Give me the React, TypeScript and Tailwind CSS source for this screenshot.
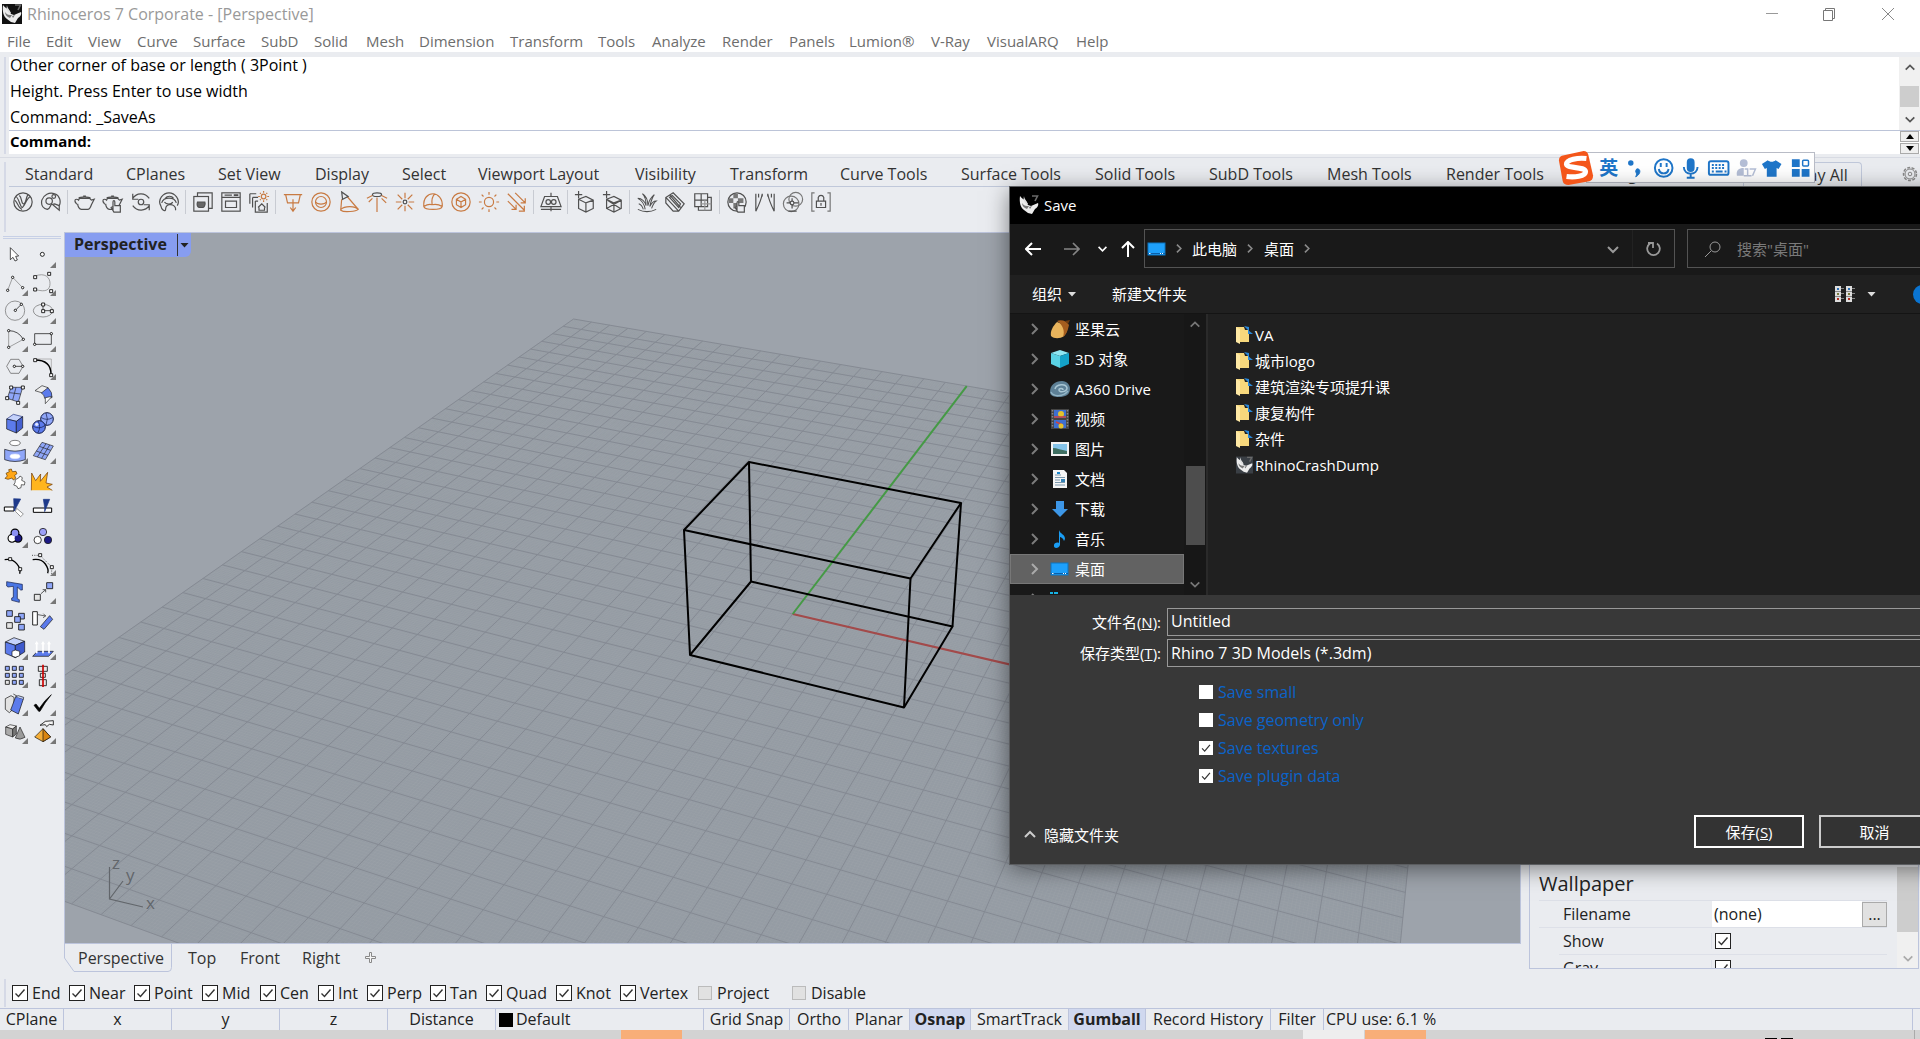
import type { ReactNode } from "react";

/* ---------- shared pieces ---------- */

function Check({ label, checked, size, box, text }: { label: string; checked: boolean; size: string; box: string; text: string }) {
  return (
    <label className={`flex items-center whitespace-nowrap ${text}`}>
      <span className={`relative block shrink-0 ${size}`}>
        <input type="checkbox" defaultChecked={checked} className={`block h-full w-full appearance-none ${box}`} />
        {checked && (
          <svg viewBox="0 0 16 16" className="pointer-events-none absolute inset-0 h-full w-full">
            <path d="M3.5 8.5 6.5 11.5 12.5 4.5" fill="none" stroke="#333" strokeWidth="1.4" />
          </svg>
        )}
      </span>
      {label}
    </label>
  );
}

function Chevron({ dir, color, className }: { dir: "up" | "down" | "right"; color: string; className: string }) {
  const d = dir === "up" ? "M2 9 7 4 12 9" : dir === "down" ? "M2 5 7 10 12 5" : "M5 2 10 7 5 12";
  return (
    <svg viewBox="0 0 14 14" className={`shrink-0 ${className}`}>
      <path d={d} fill="none" stroke={color} strokeWidth="2" />
    </svg>
  );
}

function RhinoMark({ className, bg }: { className: string; bg: string }) {
  return (
    <svg viewBox="0 0 20 20" className={`shrink-0 ${className}`}>
      <rect width="20" height="20" fill={bg} />
      <path d="M1 1C3 4 5 4 7 6L9 10 12 11 19 8C20 10 18 13 16 14L13 19 9 18 5 15C2 13 0 8 1 1Z" fill="#ececec" />
      <path d="M5 1C5 4 8 6 9 9L7 9C5 7 4 4 5 1Z" fill="#ddd" />
      <path d="M3 8C5 11 7 11 10 11L8 14C5 13 3 11 3 8Z" fill="#777" />
      <path d="M10 12l3-1-2 3Z" fill="#777" />
      <path d="M13 1h5.500L16 6" fill="none" stroke="#6a6a6a" strokeWidth="1.600" />
    </svg>
  );
}

/* ---------- menu and tab data ---------- */

const MENU: [string, string][] = [
  ["File", "w-[39px]"], ["Edit", "w-[42px]"], ["View", "w-[49px]"], ["Curve", "w-[56px]"], ["Surface", "w-[68px]"],
  ["SubD", "w-[53px]"], ["Solid", "w-[52px]"], ["Mesh", "w-[53px]"], ["Dimension", "w-[91px]"], ["Transform", "w-[88px]"],
  ["Tools", "w-[54px]"], ["Analyze", "w-[70px]"], ["Render", "w-[67px]"], ["Panels", "w-[60px]"], ["Lumion®", "w-[82px]"],
  ["V-Ray", "w-[56px]"], ["VisualARQ", "w-[89px]"], ["Help", "w-[50px]"],
];

const TABS: [string, string][] = [
  ["Standard", "w-[101px]"], ["CPlanes", "w-[92px]"], ["Set View", "w-[97px]"], ["Display", "w-[87px]"], ["Select", "w-[76px]"],
  ["Viewport Layout", "w-[157px]"], ["Visibility", "w-[95px]"], ["Transform", "w-[110px]"], ["Curve Tools", "w-[121px]"],
  ["Surface Tools", "w-[134px]"], ["Solid Tools", "w-[114px]"], ["SubD Tools", "w-[118px]"], ["Mesh Tools", "w-[119px]"],
  ["Render Tools", "w-[130px]"], ["Drafting", "w-[100px]"],
];

/* ---------- render toolbar icons, 24 unit boxes ---------- */

const G = "#505050";
const O = "#c87a42";
const TEAPOT = "M6 8h11l2 2 3-1-3 6c-1 3-3 5-4 5H8c-2 0-4-3-4-6 0 1-3-1-3-3 0-3 3-2 4-1ZM5 8c2-2 11-2 13 0M10 5.500h3";

const RENDER_ICONS: (ReactNode | null)[] = [
  <g stroke={G}><circle cx="12" cy="12" r="10" /><path d="M4 6c3 0 5 12 7 12S16 8 20 6M8 5c3 2 2 10 5 9s2-9 5-10M3 10c3 2 4 9 8 10" /></g>,
  <g stroke={G}><path d="M8 20C3 19 1 15 2 10 4 4 10 1 16 3s7 9 5 13l-5-2-4 1c-1 2-1 4-4 5Z" /><circle cx="10" cy="11" r="3.500" /><circle cx="15" cy="6" r="2" /><path d="M14 15l7 6v-5" /></g>,
  null,
  <g stroke={G}><path d={TEAPOT} /></g>,
  <g stroke={G}><path d={TEAPOT} /><path d="M12 21v-9c0-2 2-2 2 0v4h6v7h-7l-3-5 2-1" fill="#eaecf0" /></g>,
  <g stroke={G}><path d="M3 3v6h6M3 8c4-6 13-7 18 0M21 21v-6h-6M21 16c-4 6-13 7-18 0" /><circle cx="12" cy="12" r="3" /></g>,
  <g stroke={G}><path d="M3 16C-1 9 6 2 12 2s13 7 9 14M4 13c2-7 14-7 16 0M3 16c1 5 4 6 5 5s-1-5 4-6 8 3 7 6M8 8c2-3 7-3 9 0M7 12c2 3 8 3 9 0" /></g>,
  null,
  <g stroke={G}><path d="M6 6V2h16v17h-4" /><rect x="2" y="6" width="16" height="16" /><path d="M6 12h8c1 3-1 6-2 6H8c-2 0-3-3-2-6Z" fill="#666" /></g>,
  <g stroke={G}><rect x="2" y="2" width="20" height="20" /><path d="M2 7h20M6 11h12v7H6ZM5 4.500h8" /><path d="M15 4.500h5" strokeWidth="2" /></g>,
  <g stroke={G}><path d="M2 3h7M2 3v11M5 7h6M5 7v11M8 11h3M8 11v12h13V13" /><path d="M11 18l4-4 4 4M12 18v3h6v-3" /><g stroke={O}><circle cx="17" cy="6" r="2.500" /><path d="M17 0v2M17 10v2M11 6h2M21 6h2M13 2l1 1M21 2l-1 1M13 10l1-1M21 10l-1-1" /></g></g>,
  null,
  <g stroke={O}><path d="M2 4h20M4 4l2 9h12l2-9M12 9v12M9 18l3 4 3-4" /></g>,
  <g stroke={O}><circle cx="12" cy="12" r="10" /><circle cx="12" cy="12" r="6" /><path d="M6 12c2 3 10 3 12 0" /></g>,
  <g stroke={O}><path d="M4 9l-1 12c4 3 17 1 19-1L10 6" /><path d="M3 20c4-4 16-4 19 0" /><path d="M4 1l1 8 6-3Z" stroke={G} /></g>,
  <g stroke={O}><ellipse cx="12" cy="4" rx="5" ry="2" stroke={G} /><path d="M12 7v16M7 8l-4 4M17 8l5 5M7 5l-6 3M17 5l6 3" /></g>,
  <g stroke={O}><circle cx="12" cy="12" r="2" stroke={G} /><path d="M12 2v6M12 16v6M2 12h6M16 12h6M4 4l5 5M15 15l5 5M20 4l-5 5M9 15l-5 5" /></g>,
  <g stroke={O}><path d="M2 17C1 7 7 3 12 3s11 5 10 14c-1 4-19 4-20 0ZM2 17c3-2 6-3 9-2M11 15C10 8 12 5 14 3M11 15c4-1 8 0 11 2" /></g>,
  <g stroke={O}><circle cx="12" cy="12" r="10" /><path d="M7 9l5-3 5 3v6l-5 3-5-3ZM7 9l5 3 5-3M12 12v6" /></g>,
  <g stroke={O}><circle cx="12" cy="12" r="5" /><path d="M12 1v3M12 20v3M1 12h3M20 12h3M4 4l2 2M18 18l2 2M20 4l-2 2M6 18l-2 2" /></g>,
  <g stroke={O}><path d="M2 3l18 18M10 2l11 11M2 11l9 9M20 16v6h-6M21 8v5h-5M11 15v5H6" /></g>,
  null,
  <g stroke={G}><path d="M5 6h14l4 11H1ZM12 2v4M12 17v5M1 20h22" /><circle cx="9" cy="12" r="2.500" /><circle cx="15" cy="12" r="2.500" /></g>,
  null,
  <g stroke={G}><path d="M5 9l8-3 8 4v9l-8 4-8-4ZM5 9l8 4 8-3M13 13v10M1 4h8M5 0v8" /></g>,
  <g stroke={G}><path d="M5 9l8-3 8 4v9l-8 4-8-4ZM5 9l8 4 8-3M13 13v10M1 4h8M5 0v8M5 19L21 10M6 10l14 9" /></g>,
  null,
  <g stroke={G}><path d="M10 20C9 13 6 10 2 8c4 0 8 3 9 8 0-6-1-10-4-13 5 3 6 8 6 13 1-5 3-9 7-12-3 4-4 9-5 13 2-4 4-6 7-6-3 2-4 5-5 8M3 14c3 1 4 3 5 6M2 20c6 3 14 3 20 0" strokeWidth="1.100" /></g>,
  <g stroke={G}><path d="M2 7l8-5 12 12-6 8H10L2 13ZM2 7l14 15M6 4l12 14" /><path d="M6 7l10 11 2-4L9 5Z" /></g>,
  <g stroke={G}><path d="M3 3h14v14H3ZM10 3v14M3 10h14M7 17v4h14V7h-4" /><path d="M14 10v11M10 14h11" stroke="#999" /></g>,
  null,
  <g stroke={G}><circle cx="12" cy="12" r="10" /><path d="M3 8h5v5H3ZM8 3h5v5H8ZM13 8h6v5h-6ZM8 13h4v6H8Z" fill="#777" stroke="none" /><path d="M12 22v-9c0-2 2-2 2 0v3h6v7h-7l-3-5 2-1" fill="#eaecf0" /></g>,
  <g stroke={G}><path d="M2 22V3M2 22C5 16 8 10 9 3M5 7V3M22 22V3M22 22C19 16 16 10 15 3M19 7V3M9 3v3M15 3v3" /></g>,
  <g stroke="#777"><circle cx="10" cy="14" r="8.500" /><circle cx="15" cy="9" r="7.500" /><circle cx="11" cy="13" r="2" stroke={G} /><path d="M11 8v3M11 15v4M5 13h4M13 13h5M7 22h9" stroke={G} /></g>,
  <g stroke="#777"><path d="M5 2H2v20h3M19 2h3v20h-3" /><path d="M7 11h10v7H7ZM9 11V7c1-3 5-3 6 0v4M12 13v3" stroke={G} /></g>,
];

/* ---------- side toolbar icons, 84 unit cells laid out in two columns ---------- */

const HANDLE = (x: number, y: number) => <rect key={`${x}-${y}`} x={x - 4} y={y - 4} width="9" height="9" fill="#fff" stroke="#000" strokeWidth="2.500" />;
const DOT = (x: number, y: number) => <circle key={`${x}-${y}`} cx={x} cy={y} r="3.500" fill="#fff" stroke="#000" strokeWidth="2.500" />;
const B1 = "#8fa6f8";
const B2 = "#5c7bec";
const B3 = "#c5d2fb";

type Tool = { name: string; art: ReactNode; fly?: boolean };

const TOOLS_A: Tool[] = [
  { name: "Select", art: <path d="M31 56V92L39 85L45 96L52 93L47 82L56 81Z" fill="#fff" stroke="#000" /> },
  { name: "Point", fly: true, art: <circle cx="127" cy="76" r="6" fill="#fff" stroke="#000" strokeWidth="2.500" /> },
  { name: "Polyline", fly: true, art: <><path d="M23 184L38 145L68 176" stroke="#777" />{DOT(23, 184)}{DOT(38, 145)}{DOT(68, 176)}</> },
  { name: "Curve", fly: true, art: <><path d="M105 141C135 130 150 145 150 163S140 192 105 181" stroke="#777" />{HANDLE(105, 144)}{HANDLE(147, 134)}{HANDLE(105, 181)}{HANDLE(153, 186)}</> },
  { name: "Circle", fly: true, art: <><circle cx="45" cy="245" r="29" stroke="#666" /><path d="M46 244L64 226" stroke="#000" />{DOT(46, 244)}{DOT(64, 226)}</> },
  { name: "Ellipse", fly: true, art: <><ellipse cx="129" cy="245" rx="29" ry="19" stroke="#666" /><path d="M129 226v19h26" stroke="#000" />{HANDLE(129, 226)}{HANDLE(129, 246)}{HANDLE(155, 246)}</> },
  { name: "Arc", fly: true, art: <><path d="M26 305V355L70 331" stroke="#777" /><path d="M26 305Q55 305 70 331" stroke="#000" />{DOT(26, 305)}{DOT(26, 355)}{DOT(70, 331)}</> },
  { name: "Rectangle", fly: true, art: <><rect x="104" y="314" width="50" height="32" stroke="#000" />{DOT(154, 314)}{DOT(104, 346)}</> },
  { name: "Polygon", fly: true, art: <><path d="M32 391H57L69 412L57 433H32L20 412Z" stroke="#555" /><path d="M43 412h25" stroke="#000" />{DOT(43, 412)}{DOT(68, 412)}</> },
  { name: "Fillet curves", fly: true, art: <><path d="M105 390H154V436" stroke="#999" /><path d="M105 393Q153 393 153 436" stroke="#000" strokeWidth="4" />{HANDLE(105, 393)}{HANDLE(153, 438)}</> },
  { name: "Surface from points", fly: true, art: <><path d="M33 475L68 475L55 519L22 508Z" fill={B1} stroke="#222" /><path d="M48 475L38 513M28 491L62 495" stroke="#222" />{HANDLE(33, 475)}{HANDLE(68, 475)}{HANDLE(54, 521)}{HANDLE(21, 507)}</> },
  { name: "Blend surface", fly: true, art: <><path d="M105 485L126 470L144 476L134 494Z" fill="#eee" stroke="#222" /><path d="M144 476Q158 490 156 506L134 508Q134 498 124 492Z" fill={B2} stroke="#222" /><path d="M156 502L136 524V506Z" fill="#fff" stroke="#222" /></> },
  { name: "Box", fly: true, art: <><path d="M20 570L40 556L68 563L49 577Z" fill={B3} stroke="#1c2d7a" /><path d="M20 570L49 577V612L20 600Z" fill={B2} stroke="#111" /><path d="M49 577L68 563V597L49 612Z" fill="#4560cf" stroke="#111" /></> },
  { name: "Boolean union", fly: true, art: <><circle cx="141" cy="570" r="19" fill={B1} stroke="#111a44" strokeWidth="3" /><circle cx="117" cy="594" r="19" fill={B2} stroke="#111a44" strokeWidth="3" /><path d="M124 566Q140 576 158 566M138 552Q146 570 138 588M100 592Q118 602 134 590M114 576Q124 592 114 611" stroke="#111a44" /><circle cx="110" cy="586" r="5" fill="#dfe6ff" /></> },
  { name: "Project to surface", fly: true, art: <><ellipse cx="45" cy="642" rx="16" ry="8" stroke="#444" fill="#fff" /><path d="M14 661Q45 672 76 661V692Q45 703 14 692Z" fill={B1} stroke="#111" /><ellipse cx="45" cy="682" rx="15" ry="7" fill="#fff" stroke="#dfe6ff" /></> },
  { name: "Surface tools", fly: true, art: <><path d="M126 640L160 651L136 692L100 680Z" fill={B1} stroke="#222" /><path d="M138 644L112 684M149 648L125 688M118 652L152 664M109 666L144 679" stroke="#222" /></> },
  { name: "Group", art: <><path d="M18 733L28 728L26 722L34 720L37 728L48 727L51 734L44 739L47 748L40 753L36 747L24 751L15 748L22 741Z" fill="#ffa616" stroke="#5b3500" /><path d="M46 752L56 747L60 741L67 746L65 754L75 759L73 768L64 767L63 776L54 779L50 771L41 768L45 761Z" fill="#fff" stroke="#222" /></> },
  { name: "Explode", art: <path d="M94 784L95 732L107 755L122 735L121 757L143 730L138 762L157 766L141 774L157 784" fill="#ffb51d" stroke="#6b3200" /> },
];

const TOOLS_B: Tool[] = [
  { name: "Trim", art: <><rect x="13" y="51" width="29" height="12" fill="#fff" stroke="#000" strokeWidth="3" /><path d="M50 55L70 72L62 80L46 64Z" fill="#fff" stroke="#666" /><path d="M41 26L62 27L43 63Z" fill="#1e3a8a" stroke="#1e3a8a" /></> },
  { name: "Split", art: <><rect x="100" y="54" width="55" height="13" fill="#fff" stroke="#000" strokeWidth="3" /><path d="M130 28L149 28L134 65V53Z" fill="#1e3a8a" stroke="#1e3a8a" /></> },
  { name: "Union group", fly: true, art: <><g stroke="#000" strokeWidth="7"><circle cx="45" cy="129" r="10" /><circle cx="36" cy="145" r="10" /><circle cx="54" cy="145" r="10" /></g><circle cx="36" cy="145" r="10" fill="#fff" /><circle cx="54" cy="145" r="10" fill="#1c1a86" /><circle cx="45" cy="129" r="10" fill="#8c90f4" /></> },
  { name: "Ungroup", art: <g stroke="#222" strokeWidth="2.500"><circle cx="129" cy="126" r="11" fill="#9ca0f8" /><circle cx="113" cy="150" r="11" fill="#fff" /><circle cx="144" cy="150" r="11" fill="#1c1a86" /></g> },
  { name: "Edit points", art: <><path d="M14 209Q36 205 50 221T59 251" stroke="#000" strokeWidth="4" />{HANDLE(30, 207)}{HANDLE(60, 237)}</> },
  { name: "Control points", fly: true, art: <><path d="M98 209Q124 205 136 222T143 250" stroke="#000" strokeWidth="4" /><path d="M96 196H120L155 231V252" stroke="#000" strokeDasharray="3 4" />{HANDLE(120, 195)}{HANDLE(155, 231)}</> },
  { name: "Text", art: <><path d="M20 275L67 283V300H62L52 291V326L58 329V337L35 331V324L40 322V289L24 291L20 288Z" fill="#4a76e4" stroke="#111a44" /></> },
  { name: "Move", fly: true, art: <><rect x="140" y="278" width="18" height="18" fill={B1} stroke="#111" strokeWidth="2.500" /><rect x="103" y="313" width="18" height="18" fill="#e5e5e5" stroke="#111" strokeWidth="2.500" /><path d="M123 311L137 299M128 299h9v8" stroke="#111" /></> },
  { name: "Copy", art: <g stroke="#111" strokeWidth="2.500" fill={B1}><rect x="20" y="362" width="17" height="17" /><rect x="56" y="370" width="17" height="17" /><rect x="44" y="380" width="17" height="17" /><rect x="56" y="403" width="17" height="17" /><rect x="20" y="398" width="17" height="17" fill="#e5e5e5" /></g> },
  { name: "Rotate", art: <><rect x="98" y="365" width="14" height="40" fill="#fff" stroke="#000" strokeWidth="2.500" /><path d="M114 374L137 378M130 371l7 7-8 5" stroke="#222" /><path d="M149 377L158 388L132 418L121 410Z" fill={B2} stroke="#111" /></> },
  { name: "Scale", fly: true, art: <><path d="M16 456L42 443L74 454L46 466Z" fill={B3} stroke="#111" /><path d="M16 456L46 466V503L16 490Z" fill={B2} stroke="#111" /><path d="M46 466L74 454V486L46 503Z" fill="#3e59cc" stroke="#111" /><path d="M36 484L46 480L59 484V497L46 502L36 498Z" fill="#fff" stroke="#111" /></> },
  { name: "Extrude", fly: true, art: <><path d="M112 484H160L146 499H98Z" fill={B2} stroke="#111" /><path d="M110 490V458M129 490V458M147 490V458" stroke="#fff" strokeWidth="5" /><path d="M104 463l6-10 6 10ZM123 463l6-10 6 10ZM141 463l6-10 6 10Z" fill="#fff" stroke="none" /></> },
  { name: "Array", fly: true, art: <g stroke="#111" strokeWidth="2.500">{[16, 37, 58].map((x) => [529, 550, 571].map((y) => <rect key={`${x}-${y}`} x={x} y={y} width="12" height="12" fill={x === 16 && y === 571 ? "#e5e5e5" : B1} />))}</g> },
  { name: "Align", fly: true, art: <><g fill="#e8e8e8" stroke="#111" strokeWidth="2.500"><rect x="115" y="529" width="27" height="15" /><rect x="121" y="550" width="15" height="12" /><rect x="118" y="569" width="21" height="18" /></g><path d="M129 524V591" stroke="#c00" strokeWidth="5" /></> },
  { name: "Shell", fly: true, art: <><path d="M16 626L33 617L42 622V655L28 668L16 658Z" fill="#e2e2e2" stroke="#111" /><path d="M40 612L54 620" stroke="#111" /><path d="M47 620L70 627L55 672L32 660Z" fill={B2} stroke="#111" /><path d="M47 620L55 617L71 622L70 627" fill={B3} stroke="#111" /></> },
  { name: "Check", fly: true, art: <path d="M102 646L108 642L118 655Q134 630 154 614Q134 638 120 664H116Z" fill="#000" stroke="#000" /> },
  { name: "Primitives", fly: true, art: <><path d="M17 711L30 704L49 708L38 717Z" fill="#eee" stroke="#222" /><path d="M17 711L38 717V741L17 733Z" fill="#aaa" stroke="#222" /><path d="M38 717L49 708V732L38 741Z" fill="#777" stroke="#222" /><path d="M60 711L75 742Q60 752 46 744Z" fill="#9a9a9a" stroke="#222" /></> },
  { name: "Pick", fly: true, art: <><path d="M129 716L152 741L129 755L104 741Z" fill="#f5ae37" stroke="#111" /><path d="M129 716L129 755L152 741Z" fill="#d98510" stroke="#111" /><path d="M120 706L136 694L160 692V705L148 703L140 710L136 704Z" fill="#f4f4f4" stroke="#111" strokeWidth="2.500" /></> },
];

function ToolCell({ tool, box }: { tool: Tool; box: string }) {
  return (
    <button aria-label={tool.name} className="relative block h-7 w-7">
      <svg viewBox={box} className="h-7 w-7 overflow-visible" fill="none" strokeWidth="2" strokeLinejoin="round">
        {tool.art}
      </svg>
      {tool.fly && (
        <svg viewBox="0 0 6 6" className="absolute right-0 bottom-0 h-[6px] w-[6px]">
          <path d="M0 6 6 0V6Z" fill="#777" />
        </svg>
      )}
    </button>
  );
}

/* ---------- perspective viewport ---------- */

function project(u: number, v: number): [number, number] {
  const w = -0.131 * u + 0.31 * v + 1;
  return [(440 * u + 473.7 * v + 792.7) / w, (46 * u - 108.3 * v + 614) / w];
}

function gridPath(divisions: number, skip: number) {
  let d = "";
  for (let i = -divisions; i <= divisions; i++) {
    if (skip && i % skip === 0) continue;
    const t = i / divisions;
    const ends = [project(t, -1), project(t, 1), project(-1, t), project(1, t)];
    const [a, b, c, e] = ends.map(([x, y]) => `${x.toFixed(1)} ${y.toFixed(1)}`);
    d += `M${a}L${b}M${c}L${e}`;
  }
  return d;
}

const PLANE = [project(-1, -1), project(-1, 1), project(1, 1), project(1, -1)].map((p) => p.join(",")).join(" ");
const X_END = project(1, 0);
const Y_END = project(0, 1);

function Scene() {
  return (
    <svg viewBox="65 233 1455 710" preserveAspectRatio="xMinYMin slice" className="absolute inset-0 h-full w-full" fill="none">
      <polygon points={PLANE} fill="#959ca4" />
      <path d={gridPath(200, 10)} stroke="#a4aab1" strokeWidth="1" opacity="0.2" />
      <path d={gridPath(20, 0)} stroke="#858a93" strokeWidth="1" />
      <path d={`M792.700 614L${X_END.join(" ")}`} stroke="#a34a4a" strokeWidth="2" />
      <path d={`M792.700 614L${Y_END.join(" ")}`} stroke="#459a45" strokeWidth="2" />
      <g stroke="#000" strokeWidth="2" strokeLinejoin="round">
        <path d="M749 462L961 503L910.500 578.500L684 530Z" />
        <path d="M751 581.500L952.500 626.500L904 707.500L690 655Z" />
        <path d="M749 462L751 581.500M961 503L952.500 626.500M910.500 578.500L904 707.500M684 530L690 655" />
      </g>
      <path d="M109.500 867V899L143 907M109.500 899L123 881" stroke="#62666b" strokeWidth="1.200" />
      <g fill="#62666b" fontSize="17">
        <text x="112" y="869">z</text>
        <text x="126" y="881">y</text>
        <text x="146" y="909">x</text>
      </g>
    </svg>
  );
}

/* ---------- dialog icons ---------- */

const DesktopIcon = () => (
  <g>
    <rect x="1" y="4" width="17" height="12" fill="#1ea0fb" stroke="#0c74c0" />
    <path d="M1 14.500h17" stroke="#0a5fa8" />
    <path d="M2 14.500h1.500M13 14.500h1M15 14.500h1" stroke="#fff" />
  </g>
);

const TREE: { label: string; icon: ReactNode; selected?: boolean }[] = [
  { label: "坚果云", icon: <g><path d="M7 3C3 7 0 12 1 17c3 3 9 3 13 0 3-4 4-7 3-10Z" fill="#e9b45c" /><path d="M7 2c4-2 10 0 12 4-1 5-3 10-6 12 2-6 0-12-6-16Z" fill="#a55d1e" /><path d="M15 2l5-1-2 4Z" fill="#6e3b10" /></g> },
  { label: "3D 对象", icon: <g><path d="M1 4l9-3 9 3-9 3Z" fill="#8fe6f2" /><path d="M1 4l9 3v12l-9-4Z" fill="#5ad2e4" /><path d="M19 4l-9 3v12l9-4Z" fill="#14a2c8" /></g> },
  { label: "A360 Drive", icon: <g><path d="M0 13C0 6 5 2 12 2c5 0 8 4 8 8 0 6-5 8-11 8C4 18 0 17 0 13Z" fill="#5d8096" /><path d="M5 10c1-5 11-6 12-1 0 4-8 5-8 2 0-2 4-2 4 0" fill="none" stroke="#a9c6d4" strokeWidth="1.500" /><path d="M1 13c2 5 12 5 17-1" fill="none" stroke="#93b5c6" strokeWidth="1.500" /></g> },
  { label: "视频", icon: <g><rect x="1" y="0" width="18" height="20" fill="#444" /><rect x="4" y="1" width="12" height="8" fill="#3d6fd0" /><rect x="4" y="11" width="12" height="8" fill="#3d6fd0" /><circle cx="11" cy="5" r="3" fill="#e2c22d" /><path d="M4 8h12M6 13l7 3" stroke="#d0433a" strokeWidth="1.500" /><circle cx="11" cy="17" r="2.500" fill="#e2c22d" /><path d="M2.500 1v18M17.500 1v18" stroke="#888" strokeDasharray="1.500 1.500" strokeWidth="1.500" /></g> },
  { label: "图片", icon: <g><rect x="1" y="3" width="18" height="14" fill="#f2f2f2" /><rect x="3" y="5" width="14" height="10" fill="#85c4ea" /><path d="M3 9c4 0 8 2 14 3v3H3Z" fill="#3f6f62" /></g> },
  { label: "文档", icon: <g><path d="M3 1h11l3 3v15H3Z" fill="#f5f5f5" /><path d="M5 6h6M5 8.500h10M5 11h5M5 13.500h10M5 16h10" stroke="#7b98ad" /><path d="M7 4h3" stroke="#1783c9" strokeWidth="2" /><rect x="11" y="10" width="4" height="3" fill="#3683b6" /></g> },
  { label: "下载", icon: <path d="M6 2h8v8h4l-8 8-8-8h4Z" fill="#3d97e8" /> },
  { label: "音乐", icon: <g><path d="M9 1c1 4 6 4 6 9l-1 2c-1-3-3-4-4-4v8c-1 4-7 4-6 0 0-2 3-3 5-2Z" fill="#1a9df4" /></g> },
  { label: "桌面", icon: <DesktopIcon />, selected: true },
  { label: "OS (C:)", icon: <g><path d="M0 3h3v2H0ZM4 3h4v2H4Z" fill="#17b1e2" /><rect y="7" width="19" height="8" fill="#aaa" /></g> },
];

const FILES: [string, boolean][] = [
  ["VA", true], ["城市logo", true], ["建筑渲染专项提升课", true], ["康复构件", true], ["杂件", true], ["RhinoCrashDump", false],
];

function FolderIcon() {
  return (
    <svg viewBox="0 0 17 20" className="h-5 w-[17px] shrink-0">
      <path d="M0 2h8l1 3h4v12H0Z" fill="#f7d87c" />
      <path d="M0 2l4 2v15l-4-2Z" fill="#ffe9a4" />
      <path d="M8 1l5 1v4ZM12 5l5 4-5 0Z" fill="#2b88d8" />
    </svg>
  );
}

function TriangleDown({ color, className }: { color: string; className: string }) {
  return (
    <svg viewBox="0 0 8 5" className={`shrink-0 ${className}`}>
      <path d="M0 0H8L4 4.500Z" fill={color} />
    </svg>
  );
}

function SaveDialog() {
  return (
    <section
      role="dialog"
      aria-label="Save"
      className="absolute -right-[30px] top-[187px] left-[1010px] flex flex-col bg-[#383838] text-[15px] leading-5 text-white shadow-[0_4px_22px_rgba(0,0,0,0.5)] outline outline-[#5b5d60]"
    >
      <header className="flex h-[37px] items-center gap-[5px] bg-black pb-[2px] pl-[9px]">
        <RhinoMark className="h-5 w-5" bg="#000" />
        <h1>Save</h1>
      </header>

      <div className="flex h-[51px] items-center bg-[#191919] pb-[2px]">
        <button aria-label="Back" className="ml-[15px] h-4 w-4">
          <svg viewBox="0 0 16 16"><path d="M7 2 1 8l6 6M1 8h15" fill="none" stroke="#fff" strokeWidth="2" /></svg>
        </button>
        <button aria-label="Forward" className="ml-[23px] h-4 w-4">
          <svg viewBox="0 0 16 16"><path d="M9 2l6 6-6 6M15 8H0" fill="none" stroke="#858585" strokeWidth="1.700" /></svg>
        </button>
        <button aria-label="Recent" className="ml-[17px] h-[11px] w-[11px]"><Chevron dir="down" color="#fff" className="h-[11px] w-[11px]" /></button>
        <button aria-label="Up" className="ml-[12px] h-4 w-4">
          <svg viewBox="0 0 16 16"><path d="M2 7l6-6 6 6M8 1v15" fill="none" stroke="#fff" strokeWidth="2" /></svg>
        </button>
        <nav className="ml-[8px] flex h-[39px] w-[531px] items-center border border-[#535353] pl-[2px]">
          <svg viewBox="0 0 20 20" className="h-5 w-5"><DesktopIcon /></svg>
          <Chevron dir="right" color="#8a8a8a" className="ml-[6px] h-[11px] w-[11px]" />
          <button className="ml-[8px]">此电脑</button>
          <Chevron dir="right" color="#8a8a8a" className="ml-[7px] h-[11px] w-[11px]" />
          <button className="ml-[9px]">桌面</button>
          <Chevron dir="right" color="#8a8a8a" className="ml-[7px] h-[11px] w-[11px]" />
          <button aria-label="Previous locations" className="ml-auto"><Chevron dir="down" color="#999" className="h-[14px] w-[14px]" /></button>
          <button aria-label="Refresh" className="ml-[12px] flex h-full w-[42px] items-center justify-center border-l border-[#222]">
            <svg viewBox="0 0 16 16" className="h-4 w-4"><path d="M11 2.500a6.300 6.300 0 1 1-7 0M2 2h5v5" fill="none" stroke="#999" strokeWidth="1.800" /></svg>
          </button>
        </nav>
        <label className="ml-3 flex h-[39px] flex-1 items-center border border-[#535353] pl-[17px]">
          <svg viewBox="0 0 16 16" className="h-4 w-4"><path d="M0 16 6 10" stroke="#999" fill="none" /><circle cx="10" cy="6" r="5" stroke="#999" fill="none" /></svg>
          <input aria-label="Search" placeholder={'搜索"桌面"'} className="ml-4 w-40 bg-transparent outline-none placeholder:text-[#7a7a7a]" />
        </label>
      </div>

      <div className="flex h-[39px] items-center border-b border-[#141414] bg-[#202020] pl-[22px]">
        <button className="flex items-center gap-[6px]">组织<TriangleDown color="#ddd" className="h-[5px] w-[8px]" /></button>
        <button className="ml-9">新建文件夹</button>
        <button aria-label="Change view" className="mr-[37px] ml-auto flex items-center gap-[12px]">
          <svg viewBox="0 0 20 16" className="h-4 w-5">
            <path d="M0 0h6v16H0ZM11 0h6v16h-6Z" fill="#ddd" />
            <path d="M2 2h2v2H2ZM13 2h2v2h-2Z" fill="#2b6fb5" />
            <path d="M2 7h2v2H2ZM13 7h2v2h-2Z" fill="#7a7a3a" />
            <path d="M2 12h2v2H2ZM13 12h2v2h-2Z" fill="#b52b1b" />
            <path d="M6 2.500h3M6 7.500h3M6 12.500h3M17 2.500h3M17 7.500h3M17 12.500h3M0 5.500h6M0 10.500h6M11 5.500h6M11 10.500h6" stroke="#888" />
          </svg>
          <TriangleDown color="#ddd" className="h-[5px] w-[9px]" />
        </button>
        <button aria-label="Help" className="mr-[18px] h-[19px] w-[19px] rounded-full bg-[#0a74d1]" />
      </div>

      <div className="flex h-[281px] overflow-hidden bg-[#202020]">
        <ul className="w-[174px] shrink-0 overflow-hidden bg-[#191919]">
          {TREE.map((t) => (
            <li key={t.label} className={`flex h-[30px] items-center pl-[17px] ${t.selected ? "bg-[#626262] outline outline-offset-[-1px] outline-[#777]" : ""}`}>
              <Chevron dir="right" color={t.selected ? "#aaa" : "#7c7c7c"} className="h-[14px] w-[14px]" />
              <svg viewBox="0 0 20 20" className="ml-[9px] h-5 w-5 shrink-0">{t.icon}</svg>
              <span className="ml-[5px] whitespace-nowrap">{t.label}</span>
            </li>
          ))}
        </ul>
        <div className="flex w-[22px] shrink-0 flex-col items-center bg-[#171717] py-[5px]">
          <Chevron dir="up" color="#777" className="h-[12px] w-[12px]" />
          <div className="mt-[135px] mb-auto h-[79px] w-[19px] bg-[#4d4d4d]" />
          <Chevron dir="down" color="#777" className="h-[12px] w-[12px]" />
        </div>
        <ul className="flex-1 border-l-2 border-[#2a2a2a] pt-[8px] pl-[28px]">
          {FILES.map(([name, folder]) => (
            <li key={name} className="flex h-[26px] items-center gap-[2px]">
              {folder ? <FolderIcon /> : <RhinoMark className="h-[18px] w-[17px]" bg="#3a3f45" />}
              <span className="whitespace-nowrap">{name}</span>
            </li>
          ))}
        </ul>
      </div>

      <div className="grid grid-cols-[151px_1fr] items-center gap-x-[6px] gap-y-[3px] pt-[13px]">
        <label htmlFor="fname" className="text-right">文件名(<u>N</u>):</label>
        <input id="fname" defaultValue="Untitled" className="h-7 border border-[#999] bg-[#383838] px-[3px] pb-[2px] text-base outline-none" />
        <label htmlFor="ftype" className="text-right">保存类型(<u>T</u>):</label>
        <select id="ftype" className="h-7 appearance-none border border-[#999] bg-[#333] px-[3px] text-base outline-none">
          <option>Rhino 7 3D Models (*.3dm)</option>
        </select>
      </div>

      <div className="mt-[11px] flex flex-col items-start pl-[189px] text-base leading-5">
        {([["Save small", false], ["Save geometry only", false], ["Save textures", true], ["Save plugin data", true]] as [string, boolean][]).map(([l, c]) => (
          <div key={l} className="flex h-7 items-center">
            <Check label={l} checked={c} size="w-[14px] h-[14px]" box="bg-white" text="gap-[5px] text-[#0b63c8]" />
          </div>
        ))}
      </div>

      <div className="mt-[22px] flex h-[52px] items-start pl-[13px]">
        <button className="mt-[13px] flex items-center gap-[7px]">
          <Chevron dir="up" color="#ccc" className="h-[14px] w-[14px]" />
          隐藏文件夹
        </button>
        <button className="mt-[3px] ml-auto h-[33px] w-[110px] border-2 border-white bg-[#333]">保存(<u>S</u>)</button>
        <button className="mt-[3px] mr-[20px] ml-[15px] h-[33px] w-[111px] border-2 border-[#ccc] bg-[#333]">取消</button>
      </div>
    </section>
  );
}

/* ---------- input method bar ---------- */

function InputMethodBar() {
  return (
    <div className="absolute top-[149px] left-[1558px] flex h-[37px] items-center">
      <svg viewBox="0 0 38 38" className="z-10 h-9 w-9">
        <path d="M4 6 27 1q4 0 5 4l5 22q0 5-4 6L11 37q-5 0-6-4L1 11q0-4 3-5Z" fill="#f4561a" />
        <path d="M30 9C21 8 9 10 9 15c1 5 20 2 20 8 0 5-12 6-20 5" fill="none" stroke="#fff" strokeWidth="5.500" />
      </svg>
      <div className="-ml-[8px] flex h-[31px] w-[229px] items-center border border-[#b9bcc6] bg-white pl-[8px] text-[#1f76c9]">
        <button className="w-7 text-center text-[19px] leading-6 font-bold">英</button>
        <svg viewBox="0 0 28 28" className="h-7 w-7"><circle cx="9" cy="9" r="2.800" fill="currentColor" /><path d="M15 15c4-1 5 5-1 8 2-3 0-4 0-6Z" fill="currentColor" stroke="currentColor" /></svg>
        <svg viewBox="0 0 28 28" className="h-7 w-7" fill="none" stroke="currentColor" strokeWidth="2"><circle cx="14" cy="14" r="9" /><path d="M9 15c1 6 9 6 10 0M11 9v4M17 9v4" /></svg>
        <svg viewBox="0 0 28 28" className="h-7 w-7" fill="none" stroke="currentColor" strokeWidth="2"><rect x="11" y="5" width="6" height="12" rx="3" fill="currentColor" /><path d="M7 13c0 9 14 9 14 0M14 20v4M10 24h8" /></svg>
        <svg viewBox="0 0 28 28" className="h-7 w-7" fill="none" stroke="currentColor" strokeWidth="2"><rect x="4" y="7" width="20" height="14" rx="2" /><path d="M7 11h14M7 14h14" strokeDasharray="2 1.500" /><path d="M7 17.500h2M11 17.500h7M20 17.500h2" /></svg>
        <svg viewBox="0 0 28 28" className="h-7 w-7"><circle cx="12" cy="9" r="4" fill="#b4bed6" /><path d="M5 22c-1-6 2-8 7-8v8Z" fill="#b4bed6" /><path d="M13 15h3v7M18 15h6l-3 7M12 22h8" fill="none" stroke="#b4bed6" strokeWidth="1.500" /></svg>
        <svg viewBox="0 0 28 28" className="h-7 w-7"><path d="M9 6c2 2 6 2 8 0l6 4-3 5-2-1v9H8v-9l-2 1-3-5Z" fill="currentColor" /></svg>
        <svg viewBox="0 0 28 28" className="h-7 w-7"><path d="M5 5h8v8H5ZM5 15h8v8H5ZM15 15h8v8h-8Z" fill="currentColor" /><rect x="16" y="6" width="6" height="6" rx="1" fill="none" stroke="currentColor" strokeWidth="1.500" /></svg>
      </div>
    </div>
  );
}

/* ---------- bottom bars ---------- */

const OSNAPS: [string, string][] = [
  ["End", "w-[57px]"], ["Near", "w-[65px]"], ["Point", "w-[68px]"], ["Mid", "w-[58px]"], ["Cen", "w-[58px]"], ["Int", "w-[49px]"],
  ["Perp", "w-[63px]"], ["Tan", "w-[56px]"], ["Quad", "w-[70px]"], ["Knot", "w-[64px]"], ["Vertex", "w-[78px]"],
];

const PANES: [string, string][] = [
  ["Grid Snap", "w-[86px]"], ["Ortho", "w-[59px]"], ["Planar", "w-[61px]"], ["Osnap", "w-[61px]"], ["SmartTrack", "w-[98px]"],
  ["Gumball", "w-[77px]"], ["Record History", "w-[125px]"], ["Filter", "w-[53px]"],
];

export default function App() {
  return (
    <main className="relative flex h-screen flex-col overflow-hidden bg-[#eaecf0] font-['Open_Sans','Noto_Sans_CJK_SC',sans-serif] text-[15px] leading-5 text-[#222]">
      <header className="flex h-7 shrink-0 items-center bg-white pl-[2px] text-[#999]">
        <RhinoMark className="h-5 w-5" bg="#111" />
        <h1 className="ml-[5px] flex-1 text-base leading-5">Rhinoceros 7 Corporate - [Perspective]</h1>
        <div className="flex items-center gap-[44px] pr-[25px]">
          <button aria-label="Minimize" className="h-[14px] w-[14px]"><svg viewBox="0 0 14 14"><path d="M1 6.500h12" stroke="#999" /></svg></button>
          <button aria-label="Restore" className="h-[14px] w-[14px]"><svg viewBox="0 0 14 14" fill="none" stroke="#777"><path d="M.5 3.500h9v10h-9ZM2.500 3.500v-2h9v10h-2" /></svg></button>
          <button aria-label="Close" className="h-[14px] w-[14px]"><svg viewBox="0 0 14 14"><path d="M1 1l12 12M13 1 1 13" stroke="#888" /></svg></button>
        </div>
      </header>

      <nav className="flex h-6 shrink-0 items-center bg-white pt-[2px] pl-[7px] text-[#6d6d6d]">
        {MENU.map(([m, w]) => (
          <button key={m} className={`shrink-0 text-left whitespace-nowrap ${w}`}>{m}</button>
        ))}
      </nav>

      <section className="mt-[5px] ml-[4px] flex shrink-0 border-l-2 border-[#d5d9e6] pl-[3px]">
        <div className="flex-1">
          <div className="flex h-[74px] border-b border-[#bcc4d8] bg-white text-black">
            <div className="flex-1 pl-px text-base leading-[26px]">
              <p className="-mt-[5px]">Other corner of base or length ( 3Point )</p>
              <p>Height. Press Enter to use width</p>
              <p>Command: _SaveAs</p>
            </div>
            <div className="flex w-[21px] flex-col items-center bg-[#f0f0f0] py-[5px]">
              <Chevron dir="up" color="#555" className="h-[12px] w-[12px]" />
              <div className="mt-[12px] mb-auto h-[21px] w-[19px] bg-[#cdcdcd]" />
              <Chevron dir="down" color="#555" className="h-[12px] w-[12px]" />
            </div>
          </div>
          <div className="flex h-[23px] bg-white text-black">
            <label htmlFor="cmd" className="pl-px font-bold">Command:</label>
            <input id="cmd" className="ml-1 flex-1 bg-transparent outline-none" />
            <div className="flex w-[20px] flex-col gap-px pr-px">
              {["M0 5h8L4 0Z", "M0 0h8L4 5Z"].map((d) => (
                <button key={d} aria-label="Scroll history" className="flex h-[11px] items-center justify-center border border-[#aaa] bg-[#efefef]">
                  <svg viewBox="0 0 8 5" className="h-[5px] w-[8px]"><path d={d} fill="#000" /></svg>
                </button>
              ))}
            </div>
          </div>
        </div>
      </section>

      <section className="mt-[3px] shrink-0 border-t border-[#d8dbe3] pt-[4px] pl-[4px]">
        <div className="h-[70px] border-l-2 border-[#d5d9e6] pl-[3px]">
          <div className="flex h-[25px] border-b border-[#c0c8da] pl-4 text-base text-[#333]">
            {TABS.map(([t, w]) => (
              <button key={t} className={`shrink-0 text-left whitespace-nowrap ${w}`}>{t}</button>
            ))}
            <button className="ml-[67px] h-[25px] shrink-0 rounded-t border border-b-0 border-[#c0c8da] pr-[13px] pl-[40px]">V-Ray All</button>
            <button aria-label="Toolbar options" className="mr-[2px] ml-auto">
              <svg viewBox="0 0 16 16" className="h-4 w-4" fill="none" stroke="#888"><circle cx="8" cy="8" r="6.500" strokeWidth="1.500" strokeDasharray="3 1.500" /><circle cx="8" cy="8" r="5" /><circle cx="8" cy="8" r="1.800" /></svg>
            </button>
          </div>
          <div className="flex h-[30px] items-center">
            {RENDER_ICONS.map((icon, i) =>
              icon === null ? (
                <span key={i} className="mx-[2px] h-6 w-[2px] border-l border-[#c8cbd2]" />
              ) : (
                <button key={i} aria-label={`Render tool ${i}`} className="flex h-7 w-7 items-center justify-center">
                  <svg viewBox="0 0 24 24" className="h-[22px] w-[22px]" fill="none" strokeWidth="1.300">{icon}</svg>
                </button>
              )
            )}
          </div>
        </div>
      </section>

      <div className="flex min-h-0 flex-1">
        <aside className="w-16 shrink-0 pt-[4px]">
          <div className="mx-[3px] mb-[1px] h-[3px] border-y border-[#c7d0e6]" />
          <div className="grid w-14 grid-cols-2">
            {TOOLS_A.map((t, i) => <ToolCell key={t.name} tool={t} box={`${(i % 2) * 84} ${33 + Math.floor(i / 2) * 84} 84 84`} />)}
            {TOOLS_B.map((t, i) => <ToolCell key={t.name} tool={t} box={`${(i % 2) * 84} ${6 + Math.floor(i / 2) * 84} 84 84`} />)}
          </div>
        </aside>

        <div className="flex min-w-0 flex-1 flex-col">
          <div className="relative min-h-0 flex-1 overflow-hidden border border-[#bcc4dc] bg-[#9da3ab]">
            <Scene />
            <div className="relative flex h-6 w-[126px] items-center rounded-br-md bg-[#879df0] pl-[9px]">
              <span className="flex-1 pb-[2px] text-base leading-5 font-bold">Perspective</span>
              <button aria-label="Viewport menu" className="flex h-[22px] w-[14px] items-center justify-center border-l border-[#333]"><TriangleDown color="#222" className="h-[5px] w-[9px]" /></button>
            </div>
          </div>
          <div className="flex h-[28px] shrink-0 items-start text-base text-[#333]">
            <button className="relative h-7 w-[108px] text-left">
              <svg viewBox="0 0 108 28" className="absolute inset-0 h-full w-full"><path d="M.5 0V14L10 27.500H104q3.500 0 3.500-4V0" fill="none" stroke="#bcc4dc" /></svg>
              <span className="relative ml-[14px]">Perspective</span>
            </button>
            <button className="ml-4 h-7 w-[52px] text-left">Top</button>
            <button className="h-7 w-[62px] text-left">Front</button>
            <button className="h-7 w-[63px] text-left">Right</button>
            <button aria-label="New viewport" className="flex h-7 items-center"><svg viewBox="0 0 12 12" className="h-3 w-3"><path d="M4.500.5h2v4h4v2h-4v4h-2v-4h-4v-2h4Z" fill="#f5f5f5" stroke="#888" /></svg></button>
          </div>
        </div>

        <aside className="mr-px mb-[3px] ml-2 flex w-[390px] shrink-0 flex-col justify-end overflow-hidden border border-[#bcc4dc] text-base leading-5">
          <div className="flex h-[101px]">
            <div className="flex-1 overflow-hidden pr-[10px] pl-[9px]">
              <h2 className="flex h-[34px] items-center border-b border-[#dde0e8] text-xl leading-7">Wallpaper</h2>
              <div className="flex h-[27px] items-center border-b border-[#dde0e8] pl-6">
                <label htmlFor="wp" className="w-[149px]">Filename</label>
                <input id="wp" defaultValue="(none)" className="h-[26px] w-[150px] bg-white px-[2px] outline-none" />
                <button aria-label="Browse" className="h-[25px] w-[25px] border border-[#aaa] bg-[#e1e1e1] leading-4">...</button>
              </div>
              {["Show", "Gray"].map((r) => (
                <div key={r} className="ml-[20px] flex h-[27px] items-center border-b border-[#dde0e8] pl-[4px]">
                  <span className="w-[148px]">{r}</span>
                  <div className="border-l border-[#dde0e8] pl-[3px]" aria-label={r}><Check label="" checked size="w-4 h-4" box="border border-[#222] bg-white" text="" /></div>
                </div>
              ))}
            </div>
            <div className="flex w-[21px] flex-col items-center justify-between bg-[#f0f0f0] pb-1">
              <div className="h-[65px] w-full bg-[#cdcdcd]" />
              <Chevron dir="down" color="#aaa" className="h-[12px] w-[12px]" />
            </div>
          </div>
        </aside>
      </div>

      <div className="mt-[7px] mb-px ml-[4px] flex h-7 shrink-0 items-center border-l-2 border-[#d5d9e6] pl-[6px] text-base leading-5">
        {OSNAPS.map(([l, w]) => (
          <div key={l} className={`shrink-0 ${w}`}><Check label={l} checked size="w-4 h-4" box="border border-[#222] bg-white" text="gap-[4px]" /></div>
        ))}
        <div className="w-[94px]"><Check label="Project" checked={false} size="w-[14px] h-[14px]" box="border border-[#bbb] bg-[#e1e1e1]" text="gap-[5px]" /></div>
        <Check label="Disable" checked={false} size="w-[14px] h-[14px]" box="border border-[#bbb] bg-[#e1e1e1]" text="gap-[5px]" />
      </div>

      <footer className="flex h-[22px] shrink-0 items-center border-t border-[#bcc4dc] text-base leading-[21px] whitespace-nowrap">
        <div className="w-[64px] border-r border-[#bcc4dc] text-center">CPlane</div>
        {["x", "y", "z", "Distance"].map((c) => (
          <div key={c} className="w-[108px] border-r border-[#bcc4dc] text-center">{c}</div>
        ))}
        <div className="flex w-[208px] items-center gap-[3px] border-r border-[#bcc4dc] pl-[3px]"><i className="h-[14px] w-[14px] bg-black" />Default</div>
        {PANES.map(([p, w]) => (
          <button key={p} className={`shrink-0 border-r border-[#bcc4dc] ${w} ${p === "Osnap" || p === "Gumball" ? "bg-[#d0d8ef] font-bold" : ""}`}>{p}</button>
        ))}
        <div className="flex-1 pl-[2px]">CPU use: 6.1 %</div>
        <div className="h-full w-[8px] border-l border-[#bcc4dc]" />
      </footer>

      <div className="flex h-[9px] shrink-0 bg-[#d3d3d3]">
        <div className="ml-[621px] w-[61px] bg-[#f8ae78]" />
        <div className="ml-[621px] w-[61px] bg-[#eee]" />
        <div className="ml-px w-[61px] bg-[#f8ae78]" />
        <div className="mt-2 ml-[339px] w-[12px] bg-black" />
        <div className="mt-2 ml-[4px] w-[12px] bg-black" />
        <div className="mr-[5px] ml-auto w-px bg-[#aaa]" />
      </div>

      <InputMethodBar />
      <SaveDialog />
    </main>
  );
}
